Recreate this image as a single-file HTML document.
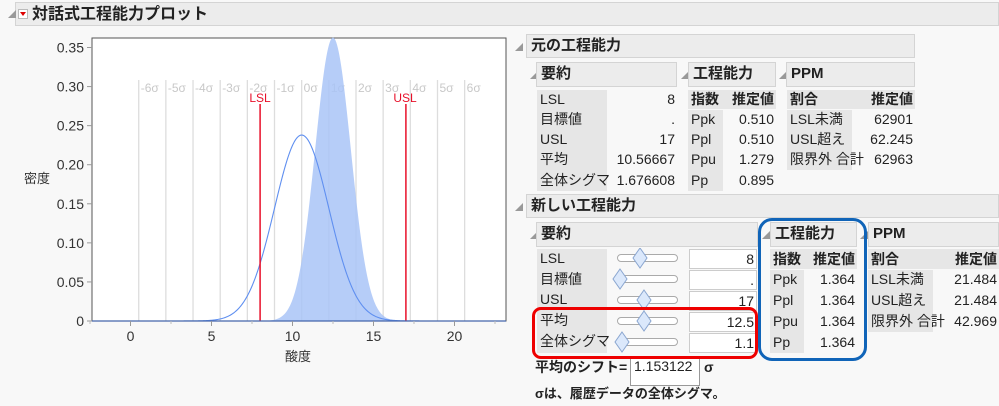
<!DOCTYPE html>
<html><head><meta charset="utf-8"><style>
body{margin:0;width:999px;height:406px;background:#f8f8f8;font-family:"Liberation Sans","Noto Sans CJK JP",sans-serif;color:#222;position:relative;overflow:hidden}
.a{position:absolute;white-space:nowrap}
.hdr{position:absolute;background:#ececec;border:1px solid #d4d4d4;font-weight:bold;font-size:15px;line-height:22px;padding-left:4px;box-sizing:border-box}
.tri{position:absolute;font-size:8px;color:#999}
.lab{position:absolute;background:#e6e6e6}
.t{position:absolute;font-size:14px;line-height:20px;white-space:nowrap}
.r{text-align:right}
.b{font-weight:bold}
.inp{position:absolute;background:#fff;border:1px solid #ccc;box-sizing:border-box;font-size:14px;text-align:right;padding-right:2px;line-height:18px}
</style></head><body>
<div class="hdr" style="left:15px;top:2px;width:984px;height:24px;font-size:16px;padding-left:16px;line-height:23px">対話式工程能力プロット</div>
<div class="a" style="left:18px;top:9px;width:10px;height:10px;background:#fff;border:1px solid #bbb;box-sizing:border-box"></div>
<div class="a" style="left:20px;top:12px;width:0;height:0;border-left:3px solid transparent;border-right:3px solid transparent;border-top:4px solid #d00"></div>
<div class="tri" style="left:8px;top:9px">◢</div>

<svg class="a" style="left:0;top:30px" width="520" height="376" viewBox="0 30 520 376" id="plot">
<rect x="92" y="38" width="414" height="283" fill="#fff" stroke="#555" stroke-width="1"/>
<g id="grid"></g>
<path id="fill" fill="#a9c4f7" opacity="0.85"/>
<path id="line" fill="none" stroke="#5f8ff0" stroke-width="1.1"/>
<line x1="260.1" y1="104" x2="260.1" y2="321" stroke="#e8102a" stroke-width="1.5"/>
<line x1="405.9" y1="104" x2="405.9" y2="321" stroke="#e8102a" stroke-width="1.5"/>
<text x="260" y="102" font-size="12" fill="#e8102a" text-anchor="middle" font-family="Liberation Sans">LSL</text>
<text x="405" y="102" font-size="12" fill="#e8102a" text-anchor="middle" font-family="Liberation Sans">USL</text>
<line x1="92" y1="321" x2="506" y2="321" stroke="#4466aa" stroke-width="1.2"/>
<g id="ax" font-size="14" fill="#333" font-family="Liberation Sans"></g>
<text x="24" y="183" font-size="13" fill="#333" font-family="Liberation Sans,Noto Sans CJK JP,sans-serif">密度</text>
<text x="285" y="361" font-size="13" fill="#333" font-family="Liberation Sans,Noto Sans CJK JP,sans-serif">酸度</text>
</svg>
<script>
(function(){
var X=function(v){return 130.5+v*16.2},Y=function(d){return 321-d*781.4};
function pdf(x,m,s){return Math.exp(-0.5*((x-m)/s)*((x-m)/s))/(s*Math.sqrt(2*Math.PI))}
var g='',m0=10.5667,s0=1.6766;
for(var k=-6;k<=6;k++){var x=X(m0+k*s0);g+='<line x1="'+x+'" y1="80" x2="'+x+'" y2="321" stroke="#ddd" stroke-width="1.3"/>';
g+='<text x="'+(x+2)+'" y="92" font-size="12" fill="#c8c8c8" font-family="Liberation Sans">'+(k==0?'0':k)+'σ</text>';}
document.getElementById('grid').innerHTML=g;
var f='M92,321',l='';
for(var v=-2.35;v<=23.2;v+=0.05){var x=X(v);f+=' L'+x.toFixed(2)+','+Y(pdf(v,12.5,1.1)).toFixed(2);l+=(l?' L':'M')+x.toFixed(2)+','+Y(pdf(v,m0,s0)).toFixed(2);}
f+=' L506,321Z';
document.getElementById('fill').setAttribute('d',f);document.getElementById('line').setAttribute('d',l);
var a='';var ys=[0,.05,.1,.15,.2,.25,.3,.35];
ys.forEach(function(d){var y=Y(d);a+='<line x1="87" y1="'+y+'" x2="92" y2="'+y+'" stroke="#999"/><text x="84" y="'+(y+5)+'" text-anchor="end">'+(d==0?'0':d.toFixed(2))+'</text>';});
[0,5,10,15,20].forEach(function(v){var x=X(v);a+='<line x1="'+x+'" y1="321" x2="'+x+'" y2="326" stroke="#999"/><text x="'+x+'" y="341" text-anchor="middle">'+v+'</text>';});
[-2.5,2.5,7.5,12.5,17.5,22.5].forEach(function(v){var x=X(v);a+='<line x1="'+x+'" y1="321" x2="'+x+'" y2="324" stroke="#bbb"/>';});
document.getElementById('ax').innerHTML=a;
})();
</script>

<!-- original -->
<div class="tri" style="left:515px;top:42px">◢</div>
<div class="hdr" style="left:526px;top:34px;width:389px;height:24px">元の工程能力</div>
<div class="tri" style="left:530px;top:70px">◢</div>
<div class="hdr" style="left:536px;top:62px;width:141px;height:25px">要約</div>
<div class="tri" style="left:681px;top:70px">◢</div>
<div class="hdr" style="left:688px;top:62px;width:88px;height:25px">工程能力</div>
<div class="tri" style="left:779px;top:70px">◢</div>
<div class="hdr" style="left:786px;top:62px;width:129px;height:25px">PPM</div>
<div class="lab" style="left:537px;top:90px;width:70px;height:101px"></div>
<div class="t" style="left:540px;top:89px">LSL</div><div class="t r" style="left:610px;top:89px;width:65px">8</div>
<div class="t" style="left:540px;top:109px">目標値</div><div class="t r" style="left:610px;top:109px;width:65px">.</div>
<div class="t" style="left:540px;top:129px">USL</div><div class="t r" style="left:610px;top:129px;width:65px">17</div>
<div class="t" style="left:540px;top:149px">平均</div><div class="t r" style="left:600px;top:149px;width:75px">10.56667</div>
<div class="t" style="left:540px;top:170px">全体シグマ</div><div class="t r" style="left:600px;top:170px;width:75px">1.676608</div>
<div class="lab" style="left:688px;top:90px;width:88px;height:19px"></div>
<div class="lab" style="left:688px;top:110px;width:35px;height:81px"></div>
<div class="t b" style="left:691px;top:89px">指数</div><div class="t b r" style="left:725px;top:89px;width:49px">推定値</div>
<div class="t" style="left:691px;top:109px">Ppk</div><div class="t r" style="left:725px;top:109px;width:49px">0.510</div>
<div class="t" style="left:691px;top:129px">Ppl</div><div class="t r" style="left:725px;top:129px;width:49px">0.510</div>
<div class="t" style="left:691px;top:149px">Ppu</div><div class="t r" style="left:725px;top:149px;width:49px">1.279</div>
<div class="t" style="left:691px;top:170px">Pp</div><div class="t r" style="left:725px;top:170px;width:49px">0.895</div>
<div class="lab" style="left:787px;top:90px;width:128px;height:19px"></div>
<div class="lab" style="left:787px;top:110px;width:65px;height:60px"></div>
<div class="t b" style="left:790px;top:89px">割合</div><div class="t b r" style="left:855px;top:89px;width:58px">推定値</div>
<div class="t" style="left:790px;top:109px">LSL未満</div><div class="t r" style="left:855px;top:109px;width:58px">62901</div>
<div class="t" style="left:790px;top:129px">USL超え</div><div class="t r" style="left:855px;top:129px;width:58px">62.245</div>
<div class="t" style="left:790px;top:149px">限界外 合計</div><div class="t r" style="left:855px;top:149px;width:58px">62963</div>

<!-- new -->
<div class="tri" style="left:515px;top:202px">◢</div>
<div class="hdr" style="left:526px;top:194px;width:473px;height:24px">新しい工程能力</div>
<div class="tri" style="left:530px;top:230px">◢</div>
<div class="hdr" style="left:536px;top:222px;width:222px;height:25px">要約</div>
<div class="tri" style="left:762px;top:230px">◢</div>
<div class="hdr" style="left:770px;top:222px;width:87px;height:25px">工程能力</div>
<div class="tri" style="left:860px;top:230px">◢</div>
<div class="hdr" style="left:868px;top:222px;width:131px;height:25px">PPM</div>
<div class="lab" style="left:537px;top:249px;width:70px;height:104px"></div>
<div class="t" style="left:540px;top:248px">LSL</div>
<div class="t" style="left:540px;top:269px">目標値</div>
<div class="t" style="left:540px;top:289px">USL</div>
<div class="t" style="left:540px;top:310px">平均</div>
<div class="t" style="left:540px;top:331px">全体シグマ</div>
<svg class="a" style="left:610px;top:248px" width="70" height="110">
<g fill="#fff" stroke="#aaa"><rect x="7.5" y="6.5" width="60" height="7" rx="3.5"/><rect x="7.5" y="27.5" width="60" height="7" rx="3.5"/><rect x="7.5" y="48.5" width="60" height="7" rx="3.5"/><rect x="7.5" y="69.5" width="60" height="7" rx="3.5"/><rect x="7.5" y="90.5" width="60" height="7" rx="3.5"/></g>
<g fill="#dbe8fb" stroke="#8aa6d0"><path d="M30 0 L37 10 L30 20 L23 10Z"/><path d="M10 21 L17 31 L10 41 L3 31Z"/><path d="M34 42 L41 52 L34 62 L27 52Z"/><path d="M34 63 L41 73 L34 83 L27 73Z"/><path d="M12 84 L19 94 L12 104 L5 94Z"/></g>
</svg>
<div class="inp" style="left:689px;top:249px;width:68px;height:20px">8</div>
<div class="inp" style="left:689px;top:270px;width:68px;height:20px">.</div>
<div class="inp" style="left:689px;top:291px;width:68px;height:20px">17</div>
<div class="inp" style="left:689px;top:312px;width:68px;height:20px">12.5</div>
<div class="inp" style="left:689px;top:333px;width:68px;height:20px">1.1</div>
<div class="lab" style="left:770px;top:249px;width:87px;height:20px"></div>
<div class="lab" style="left:770px;top:270px;width:34px;height:83px"></div>
<div class="t b" style="left:773px;top:249px">指数</div><div class="t b r" style="left:805px;top:249px;width:50px">推定値</div>
<div class="t" style="left:773px;top:269px">Ppk</div><div class="t r" style="left:805px;top:269px;width:50px">1.364</div>
<div class="t" style="left:773px;top:290px">Ppl</div><div class="t r" style="left:805px;top:290px;width:50px">1.364</div>
<div class="t" style="left:773px;top:311px">Ppu</div><div class="t r" style="left:805px;top:311px;width:50px">1.364</div>
<div class="t" style="left:773px;top:332px">Pp</div><div class="t r" style="left:805px;top:332px;width:50px">1.364</div>
<div class="lab" style="left:868px;top:249px;width:131px;height:20px"></div>
<div class="lab" style="left:868px;top:270px;width:65px;height:62px"></div>
<div class="t b" style="left:871px;top:249px">割合</div><div class="t b r" style="left:935px;top:249px;width:62px">推定値</div>
<div class="t" style="left:871px;top:269px">LSL未満</div><div class="t r" style="left:935px;top:269px;width:62px">21.484</div>
<div class="t" style="left:871px;top:290px">USL超え</div><div class="t r" style="left:935px;top:290px;width:62px">21.484</div>
<div class="t" style="left:871px;top:311px">限界外 合計</div><div class="t r" style="left:935px;top:311px;width:62px">42.969</div>
<div class="t b" style="left:535px;top:357px">平均のシフト=</div>
<div class="inp" style="left:630px;top:356px;width:70px;height:30px;text-align:left;padding-left:3px;border-color:#999">1.153122</div>
<div class="t b" style="left:704px;top:357px">σ</div>
<div class="t b" style="left:535px;top:384px;font-size:13px">σは、履歴データの全体シグマ。</div>
<div class="a" style="left:532px;top:307px;width:226px;height:52px;border:3px solid #ee0000;border-radius:9px;box-sizing:border-box"></div>
<div class="a" style="left:758px;top:218px;width:109px;height:143px;border:3px solid #1064b8;border-radius:14px;box-sizing:border-box"></div>
</body></html>
